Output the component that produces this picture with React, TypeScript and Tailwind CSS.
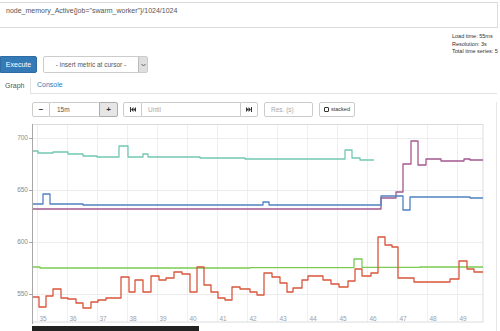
import React from 'react';

type Pt = [number, number];

// step line through [x, y] pairs in page coordinates
function stepPath(pts: Pt[], end: number) {
  return pts.map(([x, y], i) => (i === 0 ? `M${x} ${y}` : `H${x} V${y}`)).join(' ') + ` H${end}`;
}

const series: { color: string; pts: Pt[]; end: number }[] = [
  {
    color: '#72c7b3',
    end: 374,
    pts: [[33, 151], [38, 153], [53, 152], [68, 154], [83, 156], [97, 157], [119, 146], [128, 157], [143, 154], [148, 157], [200, 158], [245, 159], [345, 150], [352, 158], [360, 160]],
  },
  {
    color: '#a3588f',
    end: 483,
    pts: [[33, 209], [381, 198], [396, 192], [403, 164], [411, 141], [418, 165], [426, 159], [441, 161], [464, 159], [470, 160]],
  },
  {
    color: '#4f81c1',
    end: 483,
    pts: [[33, 204], [43, 194], [50, 204], [83, 205], [263, 202], [269, 205], [381, 196], [403, 210], [410, 197], [470, 198]],
  },
  {
    color: '#7bcb52',
    end: 483,
    pts: [[33, 267], [40, 268], [250, 267.6], [354, 259], [362, 267.4], [420, 267]],
  },
  {
    color: '#d8553b',
    end: 483,
    pts: [
      [33, 297], [39, 307], [46, 296], [53, 289], [61, 298], [68, 299], [76, 303], [83, 308], [91, 302], [98, 300],
      [106, 298], [121, 277], [129, 292], [135, 280], [143, 292], [151, 276], [159, 280], [166, 278], [174, 272],
      [182, 274], [190, 292], [197, 267], [204, 285], [211, 292], [218, 298], [225, 300], [232, 287], [240, 289],
      [250, 292], [257, 295], [264, 273], [272, 277], [280, 283], [287, 292], [293, 288], [302, 280], [308, 276],
      [323, 280], [331, 284], [339, 287], [348, 281], [355, 269], [362, 276], [371, 273], [378, 237], [385, 245],
      [392, 247], [398, 278], [414, 282], [450, 279], [459, 261], [467, 269], [474, 272],
    ],
  },
];

const yTicks = [
  { v: '700', y: 138 },
  { v: '650', y: 190 },
  { v: '600', y: 242 },
  { v: '550', y: 294 },
];

const minutes = Array.from({ length: 15 }, (_, i) => 35 + i);

function Chart() {
  return (
    <svg width="500" height="209" className="block">
      <g transform="translate(0,-122)">
        {/* grid */}
        {minutes.map((m, i) => (
          <line key={m} x1={37.5 + i * 30} x2={37.5 + i * 30} y1={124} y2={322} stroke="#efefef" strokeWidth="1" />
        ))}
        {yTicks.map(t => (
          <line key={t.v} x1={32} x2={483} y1={t.y + 0.5} y2={t.y + 0.5} stroke="#ececec" strokeWidth="1" />
        ))}
        <rect x="32.5" y="124.5" width="450.5" height="197.5" fill="none" stroke="#dcdcdc" strokeWidth="1" />
        <line x1="32.5" x2="32.5" y1="124" y2="324" stroke="#a8a8a8" strokeWidth="1" />

        {/* y axis */}
        {yTicks.map(t => (
          <g key={t.v}>
            <line x1={29} x2={32} y1={t.y + 0.5} y2={t.y + 0.5} stroke="#a8a8a8" strokeWidth="1" />
            <text x={28} y={t.y + 2.3} textAnchor="end" fontSize="6.5" fill="#8a8a8a">{t.v}</text>
          </g>
        ))}

        {/* series */}
        {series.map((s, i) => (
          <path key={i} d={stepPath(s.pts, s.end)} fill="none" stroke={s.color} strokeWidth="1.3" strokeLinejoin="round" />
        ))}

        {/* x axis labels */}
        {minutes.map((m, i) => (
          <text key={m} x={39.5 + i * 30} y={321} fontSize="6.5" fill="#a0a0a0">{m}</text>
        ))}

        <rect x="32" y="326" width="167" height="6" fill="#222" />
      </g>
    </svg>
  );
}

function SkipIcon({ dir }: { dir: 'left' | 'right' }) {
  return (
    <svg width="6" height="5" viewBox="0 0 6 5" className={dir === 'right' ? 'rotate-180' : ''}>
      <rect x="0" y="0" width="1" height="5" fill="#333" />
      <path d="M1 2.5 L3.5 0 V5 Z M3.5 2.5 L6 0 V5 Z" fill="#333" />
    </svg>
  );
}

export default function App() {
  return (
    <div className="w-[500px] h-[331px] overflow-hidden bg-white text-[#333] font-['Liberation_Sans',Arial,sans-serif]">
      {/* expression box */}
      <div className="pt-[2px]">
        <div className="h-[26px] w-[498px] border border-l-0 border-[#dcdcdc] pl-[6px] pt-[3px] text-[7px] leading-[10px] text-[#555]">
          node_memory_Active{'{'}job="swarm_worker"{'}'}/1024/1024
        </div>
      </div>

      {/* query stats */}
      <div className="h-[28px] pt-[5px] pl-[452px] text-[5.5px] leading-[7.5px] text-[#333]">
        <div>Load time: 55ms</div>
        <div>Resolution: 3s</div>
        <div>Total time series: 5</div>
      </div>

      {/* execute row */}
      <div className="flex gap-[6px] h-[17px]">
        <button className="w-[37px] h-[17px] rounded-r-[2px] bg-[#337ab7] border border-[#2e6da4] text-white text-[7px] leading-none">
          Execute
        </button>
        <div className="w-[105px] h-[17px] flex border border-[#ccc] rounded-[2px] text-[6.5px] text-[#555]">
          <div className="flex-1 flex items-center justify-center">- insert metric at cursor -</div>
          <div className="w-[9px] bg-[#dedede] border-l border-[#bbb] flex items-center justify-center">
            <svg width="5" height="4" viewBox="0 0 5 4">
              <path d="M0.5 1 L2.5 3 L4.5 1" fill="none" stroke="#555" strokeWidth="0.9" />
            </svg>
          </div>
        </div>
      </div>

      {/* tabs */}
      <div className="mt-[5px] flex h-[16px] text-[7px]">
        <div className="w-[31px] border-r border-[#e2e2e2] flex items-center pl-[5px] text-[#555]">Graph</div>
        <div className="flex-1 border-b border-[#e2e2e2] flex items-center pl-[6px] text-[#337ab7] w-[466px] max-w-[466px]">Console</div>
      </div>

      {/* graph panel */}
      <div className="w-[497px] h-[240px] border-r border-[#e8e8e8]">
        <div className="mt-[8px] pl-[32px] flex h-[15px] text-[6.5px]">
          <div className="flex">
            <div className="w-[18px] border border-[#ccc] rounded-l-[2px] flex items-center justify-center font-bold text-[8px]">−</div>
            <div className="w-[49px] border-y border-[#ccc] flex items-center pl-[7px] text-[#555]">15m</div>
            <div className="w-[19px] border border-[#adadad] bg-[#e6e6e6] rounded-r-[2px] flex items-center justify-center font-bold text-[8px]">+</div>
          </div>
          <div className="flex ml-[5px]">
            <div className="w-[19px] border border-[#ccc] rounded-l-[2px] flex items-center justify-center">
              <SkipIcon dir="left" />
            </div>
            <div className="w-[98px] border-y border-[#ccc] flex items-center pl-[6px] text-[#aaa]">Until</div>
            <div className="w-[18px] border border-[#ccc] rounded-r-[2px] flex items-center justify-center">
              <SkipIcon dir="right" />
            </div>
          </div>
          <div className="w-[49px] ml-[6px] border border-[#ccc] rounded-[2px] flex items-center pl-[6px] text-[#aaa]">Res. (s)</div>
          <div className="w-[36px] ml-[6px] border border-[#ccc] rounded-[2px] flex items-center justify-center gap-[2px] text-[5.5px]">
            <span className="inline-block w-[5px] h-[5px] border border-[#333] rounded-[1px]" />
            stacked
          </div>
        </div>
        <div className="mt-[5px]">
          <Chart />
        </div>
      </div>
    </div>
  );
}
